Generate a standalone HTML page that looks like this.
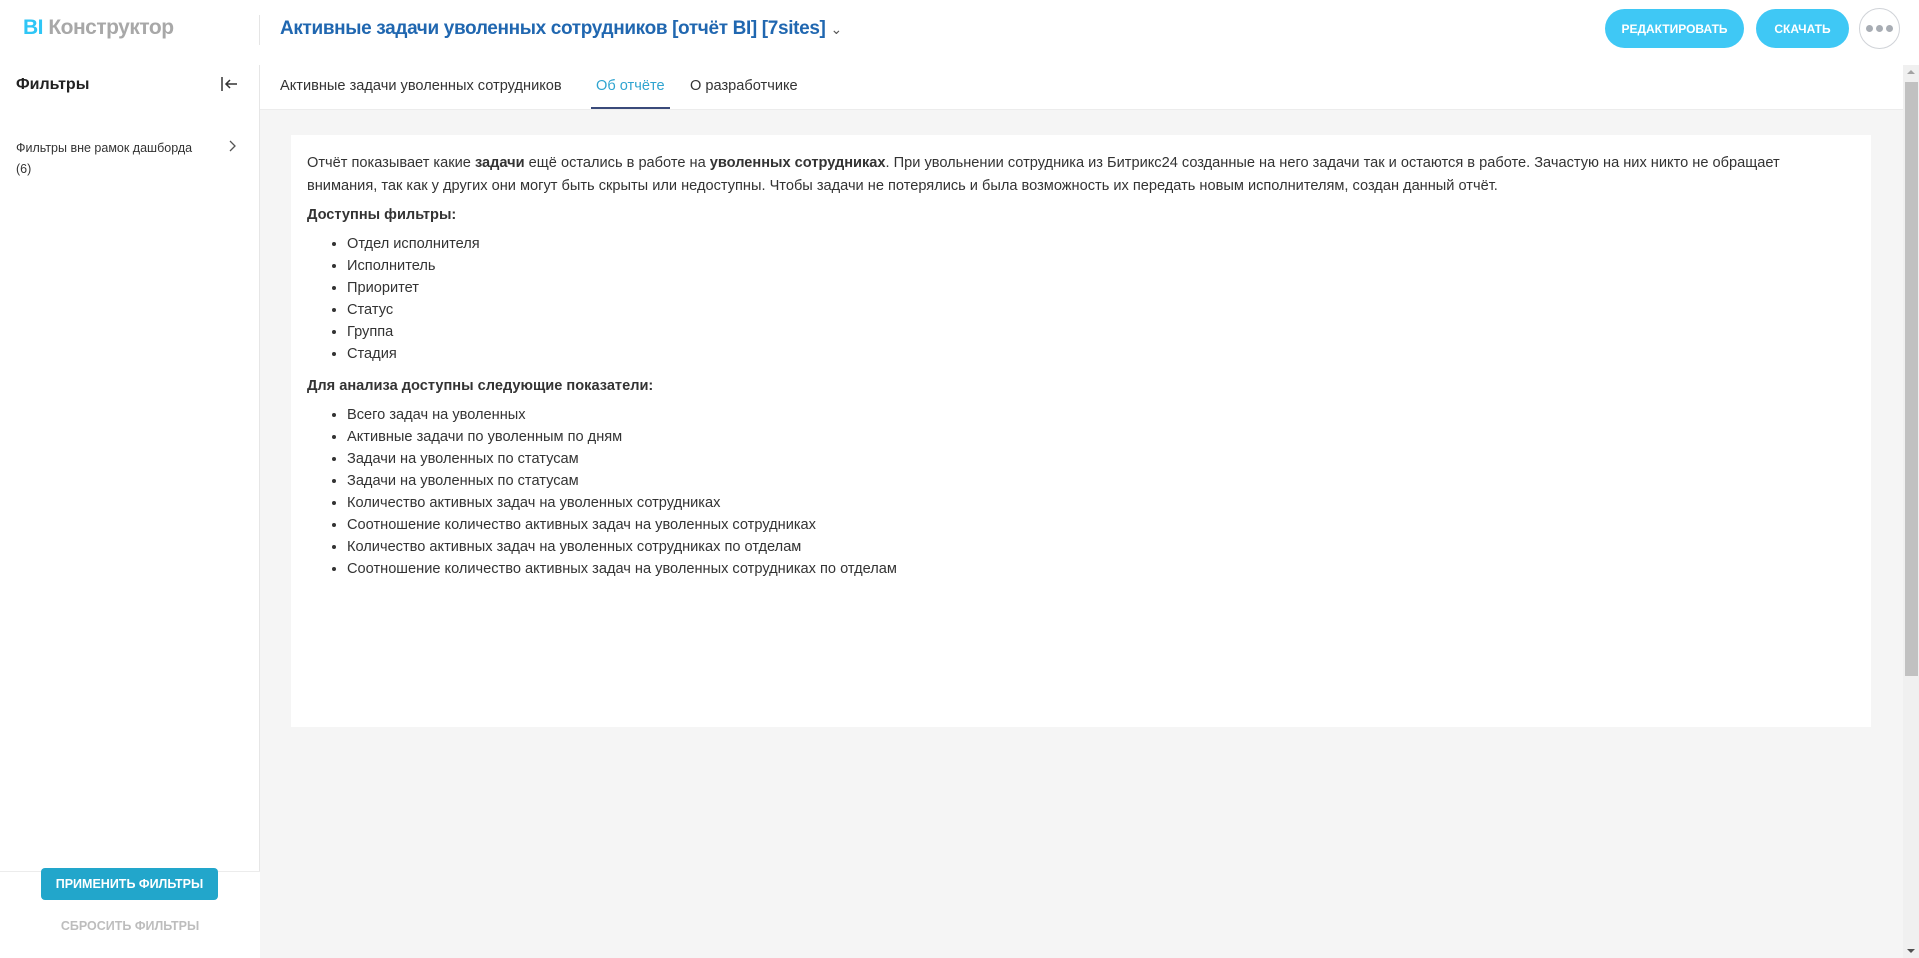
<!DOCTYPE html>
<html><head><meta charset="utf-8"><style>
*{box-sizing:border-box;margin:0;padding:0}
body{width:1919px;height:958px;overflow:hidden;background:#fff;font-family:"Liberation Sans",sans-serif;color:#333;position:relative}
.abs{position:absolute}
.logo{left:23px;top:16px;font-size:21px;font-weight:bold;color:#a8a8a8;letter-spacing:-0.5px}
.logo b{color:#2fc6f6}
.vdiv{left:259px;top:15px;width:1px;height:30px;background:#e5e5e5}
.title{left:280px;top:18px;font-size:19px;font-weight:bold;color:#2067b0;letter-spacing:-0.35px}
.btn{top:9px;height:39px;border-radius:20px;background:#3fc8f5;color:#fff;font-size:12px;font-weight:bold;display:flex;align-items:center;justify-content:center}
.dots{left:1859px;top:8px;width:41px;height:41px;border-radius:50%;border:1px solid #d0d3d8;display:flex;align-items:center;justify-content:center;gap:3px}
.dots i{width:7px;height:7px;border-radius:50%;background:#a8adb4;display:block}
.side{left:0;top:65px;width:260px;height:807px;border-right:1px solid #e6e6e6}
.main{left:260px;top:110px;width:1643px;height:848px;background:#f5f5f5}
.tabs{left:260px;top:65px;width:1643px;height:45px;border-bottom:1px solid #ececec;background:#fff}
.tab{top:78px;font-size:14.6px;color:#333}
.card{left:291px;top:135px;width:1580px;height:592px;background:#fff;padding:17px 80px 17px 16px;font-size:14.6px;line-height:23px;color:#333}
.card ul{padding-left:40px;margin:4px 0 6px}
.card li{line-height:22px}
.card p{margin-bottom:6px}
.sb{left:1903px;top:65px;width:16px;height:893px;background:#f0f0f0}
.thumb{left:1905px;top:82px;width:13px;height:594px;background:#c1c1c1}
</style></head><body>
<div class="abs logo"><b>BI</b> Конструктор</div>
<div class="abs vdiv"></div>
<div class="abs title">Активные задачи уволенных сотрудников [отчёт BI] [7sites] <span style="font-size:14px;color:#555;font-weight:normal">&#8964;</span></div>
<div class="abs btn" style="left:1605px;width:139px">РЕДАКТИРОВАТЬ</div>
<div class="abs btn" style="left:1756px;width:93px">СКАЧАТЬ</div>
<div class="abs dots"><i></i><i></i><i></i></div>

<div class="abs side"></div>
<div class="abs" style="left:16px;top:76px;font-size:16px;font-weight:bold;color:#222">Фильтры</div>
<svg class="abs" style="left:220px;top:75px" width="20" height="18" viewBox="0 0 20 18"><path d="M2 2v14M17 9H6M10 5L6 9l4 4" stroke="#333" stroke-width="1.5" fill="none"/></svg>
<div class="abs" style="left:16px;top:138px;font-size:12.5px;line-height:21px;color:#333">Фильтры вне рамок дашборда<br>(6)</div>
<svg class="abs" style="left:228px;top:139px" width="10" height="14" viewBox="0 0 10 14"><path d="M2 2l5 5-5 5" stroke="#555" stroke-width="1.3" fill="none"/></svg>
<div class="abs" style="left:0;top:871px;width:260px;height:1px;background:#ececec"></div>
<div class="abs" style="left:41px;top:868px;width:177px;height:32px;background:#22a6cb;border-radius:4px;color:#fff;font-size:12.5px;font-weight:bold;display:flex;align-items:center;justify-content:center">ПРИМЕНИТЬ ФИЛЬТРЫ</div>
<div class="abs" style="left:0;top:919px;width:260px;text-align:center;font-size:12.5px;font-weight:bold;color:#bdbdbd">СБРОСИТЬ ФИЛЬТРЫ</div>

<div class="abs main"></div>
<div class="abs tabs"></div>
<div class="abs tab" style="left:280px">Активные задачи уволенных сотрудников</div>
<div class="abs tab" style="left:596px;color:#2fa4d0">Об отчёте</div>
<div class="abs" style="left:591px;top:107px;width:79px;height:2px;background:#3a4a7a"></div>
<div class="abs tab" style="left:690px">О разработчике</div>

<div class="abs card">
<p>Отчёт показывает какие <b>задачи</b> ещё остались в работе на <b>уволенных сотрудниках</b>. При увольнении сотрудника из Битрикс24 созданные на него задачи так и остаются в работе. Зачастую на них никто не обращает внимания, так как у других они могут быть скрыты или недоступны. Чтобы задачи не потерялись и была возможность их передать новым исполнителям, создан данный отчёт.</p>
<p><b>Доступны фильтры:</b></p>
<ul><li>Отдел исполнителя</li><li>Исполнитель</li><li>Приоритет</li><li>Статус</li><li>Группа</li><li>Стадия</li></ul>
<p style="margin-top:10px"><b>Для анализа доступны следующие показатели:</b></p>
<ul><li>Всего задач на уволенных</li><li>Активные задачи по уволенным по дням</li><li>Задачи на уволенных по статусам</li><li>Задачи на уволенных по статусам</li><li>Количество активных задач на уволенных сотрудниках</li><li>Соотношение количество активных задач на уволенных сотрудниках</li><li>Количество активных задач на уволенных сотрудниках по отделам</li><li>Соотношение количество активных задач на уволенных сотрудниках по отделам</li></ul>
</div>

<div class="abs sb"></div>
<div class="abs thumb"></div>
<svg class="abs" style="left:1906px;top:68px" width="10" height="8"><path d="M1 6L5 2 9 6z" fill="#a3a3a3"/></svg>
<svg class="abs" style="left:1906px;top:947px" width="10" height="8"><path d="M1 2L5 6 9 2z" fill="#505050"/></svg>
</body></html>
